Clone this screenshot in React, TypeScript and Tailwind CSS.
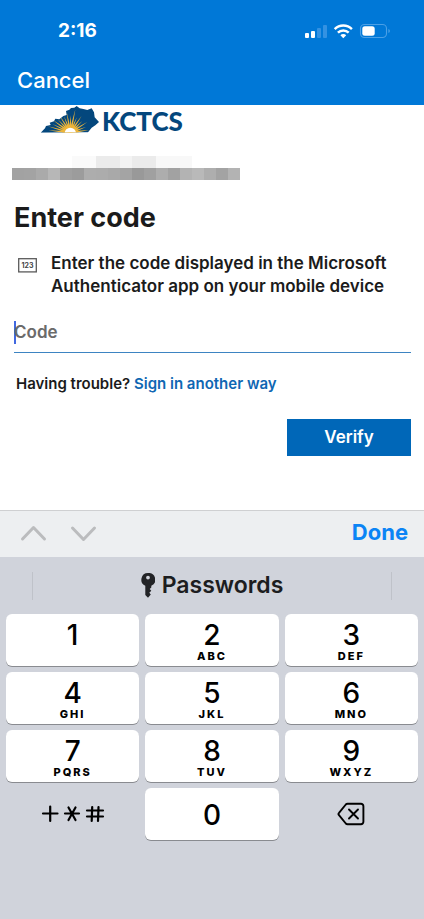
const keys = [
  { digit: '1', letters: '' },
  { digit: '2', letters: 'ABC' },
  { digit: '3', letters: 'DEF' },
  { digit: '4', letters: 'GHI' },
  { digit: '5', letters: 'JKL' },
  { digit: '6', letters: 'MNO' },
  { digit: '7', letters: 'PQRS' },
  { digit: '8', letters: 'TUV' },
  { digit: '9', letters: 'WXYZ' },
]

// The account name is hidden behind a row of grey blocks
const maskColors = [
  '#a2a2a2', '#a3a3a3', '#aaaaaa', '#b7b7b7', '#a0a0a0', '#9c9c9c', '#adadad',
  '#acacac', '#a9a9a9', '#a4a4a4', '#999999', '#a0a0a0', '#adadad', '#a2a2a2',
  '#b3b3b3', '#b9b9b9', '#aeaeae', '#a3a3a3', '#b3b3b3',
]

// [angle, length] of each sun ray
const rays = [
  [-84, 66], [-74, 70], [-64, 60], [-54, 66], [-43, 54], [-32, 62], [-21, 52], [-10, 62],
  [1, 52], [12, 72], [23, 50], [34, 60], [46, 50], [58, 60], [70, 50], [82, 56],
]

function StatusIcons() {
  return (
    <svg width="86" height="18" viewBox="0 0 86 18" fill="none" aria-hidden="true">
      <rect x="0" y="11" width="4" height="5" rx="1" fill="#fff" />
      <rect x="6" y="9" width="4" height="7" rx="1" fill="#fff" />
      <rect x="12" y="6" width="4" height="10" rx="1" fill="#3492e2" />
      <rect x="18" y="3" width="4" height="13" rx="1" fill="#3492e2" />
      <g stroke="#fff" strokeWidth="2.4">
        <path d="M29.7 7.2a12 12 0 0 1 17.2 0" />
        <path d="M32.9 10.7a7.6 7.6 0 0 1 10.8 0" />
      </g>
      <path d="M35.4 13.2a4 4 0 0 1 5.8 0L38.3 16.2z" fill="#fff" />
      <rect x="55.5" y="2.5" width="26" height="13" rx="4" stroke="#4ba0e6" strokeWidth="1.1" />
      <path d="M83.400 7v4c2-.8 2-3.200 0-4z" fill="#4ba0e6" />
      <rect x="57.3" y="4.3" width="12.4" height="9.4" rx="2.5" fill="#fff" />
    </svg>
  )
}

function Logo() {
  return (
    <div className="flex items-start gap-[2px] pl-7">
      <svg width="60" height="27" viewBox="120 18 180 81" aria-hidden="true">
        <defs>
          <clipPath id="state">
            <path d="M122 98l13-13 3-7 14-3-3-7 13-4 4-8 12 2 12-10 10-3-2-12 10-4 5-5 10-1 7-5 9 7 11 2 12 3 13-5 7 12 2 15 13 14-11 10-11 7-11 14z" />
          </clipPath>
        </defs>
        <g clipPath="url(#state)">
          <rect x="120" y="18" width="180" height="82" fill="#04477d" />
          <circle cx="211" cy="100" r="25" fill="#f0b32c" />
          {rays.map(([angle, length]) => (
            <path
              key={angle}
              d={`M207 98L211 ${98 - length}L215 98z`}
              fill="#edb53a"
              transform={`rotate(${angle} 211 98)`}
            />
          ))}
          <circle cx="211" cy="100" r="17" fill="#fff" />
        </g>
      </svg>
      <span className="pt-[3px] font-[Lato] text-[26px] font-black leading-6 text-[#04477d]">KCTCS</span>
    </div>
  )
}

function MaskedAccount() {
  return (
    <div className="mt-[23px] w-[228px]" aria-hidden="true">
      <div className="flex h-3 pl-[60px]">
        <span className="w-6 bg-[#fafafa]" />
        <span className="w-6 bg-[#ebebeb]" />
        <span className="w-3 bg-[#f3f3f3]" />
        <span className="w-6 bg-[#ebebeb]" />
        <span className="w-9 bg-[#f8f8f8]" />
      </div>
      <div className="flex h-3">
        {maskColors.map((color, i) => (
          <span key={i} className="flex-1" style={{ backgroundColor: color }} />
        ))}
      </div>
    </div>
  )
}

function KeyIcon() {
  return (
    <svg width="14" height="25" viewBox="0 0 14 25" aria-hidden="true">
      <path
        fillRule="evenodd"
        fill="#222326"
        d="M7 0a6.7 6.7 0 0 0-2.700 12.800V22L7 24.700l2.800-3.200-1.500-1.700 2-2-1.600-1.700 1.600-1.700v-1.600A6.700 6.700 0 0 0 7 0zm0 2.700a1.900 1.900 0 1 1 0 3.800 1.900 1.900 0 0 1 0-3.800z"
      />
    </svg>
  )
}

function SymbolsIcon() {
  return (
    <svg width="64" height="18" viewBox="0 0 64 18" fill="none" stroke="#000" strokeWidth="2.2" strokeLinecap="round" aria-hidden="true">
      <path d="M2 8.500h14.500M9.200 1.500v14.500" />
      <path d="M24 8.500h14M27.500 2.500l7 12.500M34.500 2.500l-7 12.500" />
      <path d="M46 5.500h16M46 11.500h16M51.200 2l-.5 14M57.500 2l-.5 14" />
    </svg>
  )
}

function DeleteIcon() {
  return (
    <svg width="28" height="24" viewBox="0 0 28 24" fill="none" stroke="#000" strokeWidth="1.900" strokeLinecap="round" strokeLinejoin="round" aria-hidden="true">
      <path d="M10.500 1.800h13.500a2.400 2.400 0 0 1 2.400 2.400v15.600a2.400 2.400 0 0 1-2.400 2.400h-13.500a2.400 2.400 0 0 1-1.700-.7L2 13.200a1.800 1.800 0 0 1 0-2.400l6.800-8.300a2.400 2.400 0 0 1 1.700-.7z" />
      <path d="M12 7.500l9 9M21 7.500l-9 9" />
    </svg>
  )
}

const keyClass =
  'flex h-[52px] flex-col items-center rounded-[6px] bg-white text-black shadow-[0_1px_0_#898b90]'

function Keyboard() {
  return (
    <section aria-label="Keyboard" className="bg-[#d0d3db]">
      <div className="flex h-[47px] items-center border-t border-[#cfd0d2] bg-[#edeff1] pb-[3px] pl-[18px] pr-4">
        <button aria-label="Previous field" className="flex w-[50px] text-[#bbbcbe]">
          <svg width="30" height="20" viewBox="0 0 30 20" fill="none" stroke="currentColor" strokeWidth="3" strokeLinecap="round" strokeLinejoin="round">
            <path d="M4.500 16L15.500 4.500L26.500 16" />
          </svg>
        </button>
        <button aria-label="Next field" className="flex text-[#bbbcbe]">
          <svg width="30" height="20" viewBox="0 0 30 20" fill="none" stroke="currentColor" strokeWidth="3" strokeLinecap="round" strokeLinejoin="round">
            <path d="M4.500 5L15.500 16.500L26.500 5" />
          </svg>
        </button>
        <button className="ml-auto text-[22px] font-bold text-[#0b84f5]">Done</button>
      </div>

      <div className="flex h-[57px] items-center justify-between px-8">
        <span className="h-7 w-px bg-[#bfc2c9]" />
        <button className="flex items-center gap-[7px] text-[23px] font-semibold text-[#1c1d20]">
          <KeyIcon />
          Passwords
        </button>
        <span className="h-7 w-px bg-[#bfc2c9]" />
      </div>

      <div className="grid grid-cols-3 gap-[6px] px-[6px] pb-[79px]">
        {keys.map(({ digit, letters }) => (
          <button key={digit} className={keyClass}>
            <span className="pt-[6px] text-[28px] font-medium leading-[30px]">{digit}</span>
            <span className="text-[11px] font-extrabold leading-3 tracking-[2px]">{letters}</span>
          </button>
        ))}
        <button aria-label="Symbols" className="flex h-[52px] items-center justify-center">
          <SymbolsIcon />
        </button>
        <button className={keyClass}>
          <span className="text-[28px] font-medium leading-[54px]">0</span>
        </button>
        <button aria-label="Delete" className="flex h-[52px] items-center justify-center">
          <DeleteIcon />
        </button>
      </div>
    </section>
  )
}

export default function App() {
  return (
    <div className="flex min-h-screen flex-col bg-white font-[Inter,sans-serif] text-[#1b1b1b]">
      <header className="h-[105px] bg-[#0078d7] text-white">
        <div className="flex items-center justify-between pl-[58px] pr-[33px] pt-[18px]">
          <span className="text-[19px] font-bold leading-[26px]">2:16</span>
          <StatusIcons />
        </div>
        <button className="ml-[17px] mt-[22px] block text-[22px] font-medium leading-7">Cancel</button>
      </header>

      <main className="flex-1 px-3 pt-px">
        <Logo />
        <MaskedAccount />

        <form className="pl-[2px] pr-px" onSubmit={(e) => e.preventDefault()}>
          <h1 className="mt-5 text-[27px] font-bold leading-9">Enter code</h1>

          <div className="mt-4 flex gap-[14px] pl-1">
            <svg className="mt-[6px] shrink-0" width="19" height="15" viewBox="0 0 19 15" aria-hidden="true">
              <rect x=".7" y=".7" width="17.6" height="13.2" fill="none" stroke="#5a5a5a" strokeWidth="1.3" />
              <text x="9.5" y="10" textAnchor="middle" fontSize="7" fontWeight="700" fill="#444">123</text>
            </svg>
            <p className="text-[17px] font-semibold leading-[23px]">
              Enter the code displayed in the Microsoft Authenticator app on your mobile device
            </p>
          </div>

          <div className="mt-5 flex h-[35px] items-center border-b border-[#3d84c2] pb-[5px]">
            <span className="h-[23px] w-[2px] bg-[#4168e0]" />
            <input
              aria-label="Code"
              placeholder="Code"
              inputMode="numeric"
              className="-ml-[2px] w-full bg-transparent text-[17px] font-semibold outline-none placeholder:text-[#6b6b6b]"
            />
          </div>

          <p className="mt-5 pl-[2px] text-[15px] font-semibold leading-[22px]">
            Having trouble?{' '}
            <a href="#" className="text-[#0f67b3]">Sign in another way</a>
          </p>

          <div className="mt-6 flex justify-end">
            <button type="submit" className="h-[37px] w-[124px] bg-[#0067b8] text-[17px] font-semibold text-white">
              Verify
            </button>
          </div>
        </form>
      </main>

      <Keyboard />
    </div>
  )
}
